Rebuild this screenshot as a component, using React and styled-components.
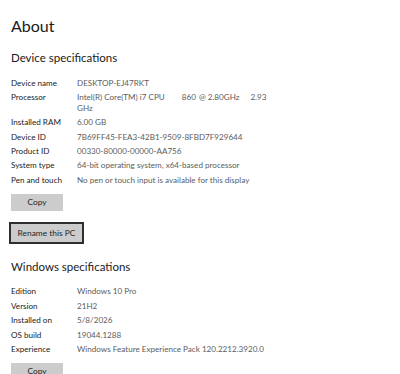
import React from "react";
import styled, { createGlobalStyle } from "styled-components";

const GlobalStyle = createGlobalStyle`
  html, body {
    margin: 0;
    padding: 0;
    background: #ffffff;
  }
  body {
    font-family: Lato, "Noto Sans", sans-serif;
    color: #1f1f1f;
  }
`;

const deviceSpecs = [
  ["Device name", "DESKTOP-EJ47RKT"],
  ["Processor", null],
  ["Installed RAM", "6.00 GB"],
  ["Device ID", "7B69FF45-FEA3-42B1-9509-8FBD7F929644"],
  ["Product ID", "00330-80000-00000-AA756"],
  ["System type", "64-bit operating system, x64-based processor"],
  ["Pen and touch", "No pen or touch input is available for this display"],
];

const windowsSpecs = [
  ["Edition", "Windows 10 Pro"],
  ["Version", "21H2"],
  ["Installed on", "5/8/2026"],
  ["OS build", "19044.1288"],
  ["Experience", "Windows Feature Experience Pack 120.2212.3920.0"],
];

function SpecList({ items }) {
  return (
    <SpecGrid>
      {items.map(([label, value]) => (
        <React.Fragment key={label}>
          <Label>{label}</Label>
          {value ? (
            <Value>{value}</Value>
          ) : (
            <Value>
              Intel(R) Core(TM) i7 CPU<Gap $w={17}>860</Gap>
              <Gap $w={3}>@ 2.80GHz</Gap>
              <Gap $w={11}>2.93</Gap>
              <br />
              GHz
            </Value>
          )}
        </React.Fragment>
      ))}
    </SpecGrid>
  );
}

function App() {
  return (
    <>
      <GlobalStyle />
      <Page>
        <Title>About</Title>
        <SectionTitle>Device specifications</SectionTitle>
        <SpecList items={deviceSpecs} />
        <Button>Copy</Button>
        <Button $outlined>Rename this PC</Button>

        <SectionTitle $top={4}>Windows specifications</SectionTitle>
        <SpecList items={windowsSpecs} />
        <Button>Copy</Button>
      </Page>
    </>
  );
}

export default App;

const Page = styled.div`
  padding: 16px 11px 0 11px;
  display: flex;
  flex-direction: column;
  align-items: flex-start;
`;

const Title = styled.h1`
  margin: 0;
  font-size: 16px;
  font-weight: 400;
  line-height: 20px;
  color: #1a1a1a;
`;

const SectionTitle = styled.h2`
  margin: ${(p) => p.$top ?? 14}px 0 11.5px 0;
  font-size: 11.5px;
  font-weight: 400;
  line-height: 16px;
  color: #1a1a1a;
`;

const SpecGrid = styled.div`
  display: grid;
  grid-template-columns: 66px 200px;
  row-gap: 3.4px;
  font-size: 8.1px;
  line-height: 11px;
  margin-bottom: 8px;
`;

const Label = styled.div`
  color: #222222;
  white-space: nowrap;
`;

const Value = styled.div`
  color: #5c5c5c;
  white-space: nowrap;
`;

const Gap = styled.span`
  margin-left: ${(p) => p.$w}px;
`;

const Button = styled.button`
  font-family: inherit;
  font-size: 8.4px;
  color: #1f1f1f;
  background: #cccccc;
  border: ${(p) => (p.$outlined ? "2px solid #2e2e2e" : "none")};
  padding: 0;
  width: ${(p) => (p.$outlined ? "75px" : "52px")};
  height: ${(p) => (p.$outlined ? "22px" : "17px")};
  margin-left: ${(p) => (p.$outlined ? "-2px" : "0")};
  margin-bottom: 11px;
  cursor: pointer;
`;
